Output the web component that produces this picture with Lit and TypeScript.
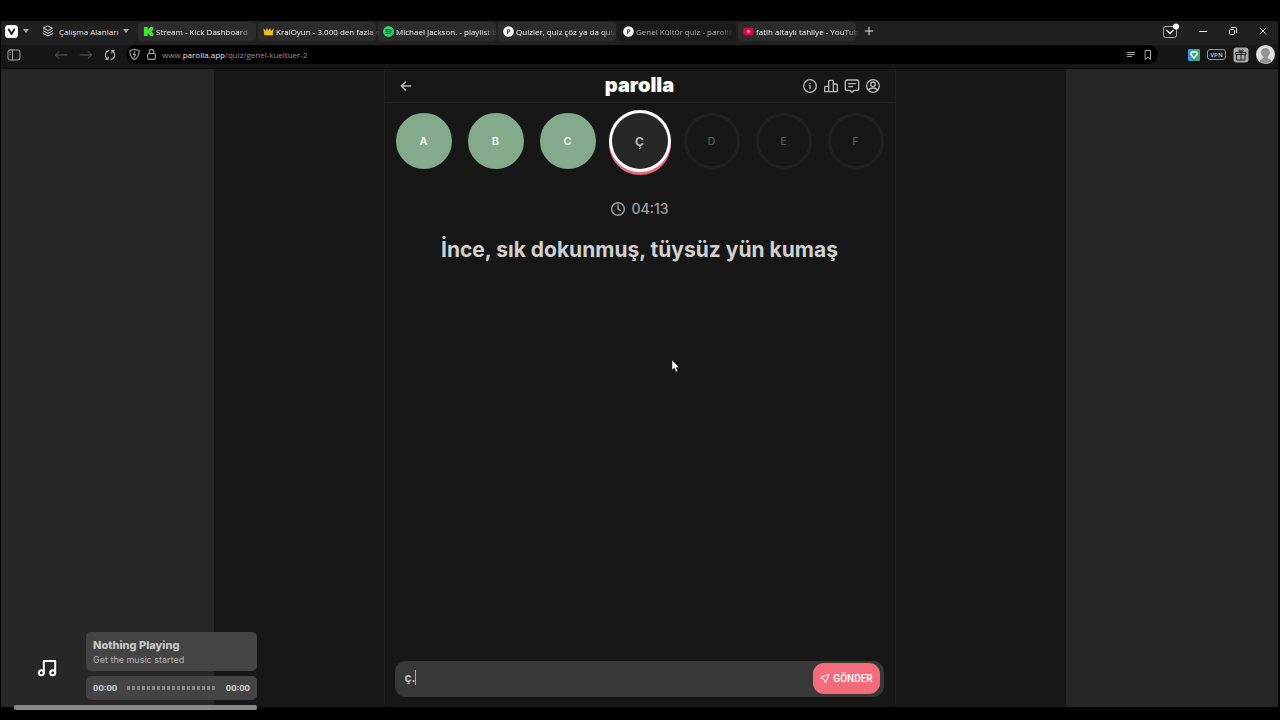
import { LitElement, html, css, svg, TemplateResult } from "lit";
import { customElement, state } from "lit/decorators.js";
import { classMap } from "lit/directives/class-map.js";

type Tab = { title: string; icon: TemplateResult; active?: boolean };
type Letter = { label: string; status: "correct" | "current" | "idle" };

const kick = svg`<path d="M1 1h4v2.500h1.300V2.300h1.200V1H11.300v3.600H10v1.400H9v.3h1v1.200h1.300V11H7.500V9.800H6.300V8.500H5V11H1z" fill="#3fe52b"/>`;
const crown = svg`<path d="M.5 2.500 3 5.500 4.300 2.200 6 5.200 7.700 2.200 9 5.500 11.500 2.500 10.700 10H1.300z" fill="#f1bd18"/>`;
const spotify = svg`<circle cx="6" cy="6" r="5.900" fill="#2fd566"/><path d="M2.700 4.400c2.300-.7 4.700-.4 6.700.7M3 6.300c2-.6 4-.3 5.700.6M3.300 8.100c1.700-.4 3.300-.2 4.700.6" fill="none" stroke="#12401f" stroke-width="1" stroke-linecap="round"/>`;
const parollaMark = svg`<circle cx="6" cy="6" r="5.800" fill="#f4f4f4"/><path d="M5 8.200V4.200h1.200a1.200 1.200 0 0 1 0 2.400H5" fill="none" stroke="#444" stroke-width="1.100"/>`;
const youtube = svg`<rect x=".5" y="2" width="11" height="8" rx="2.200" fill="#e2063f"/><path d="M4.900 4.200 8 6 4.900 7.800z" fill="#fff"/>`;

@customElement("app-root")
export class AppRoot extends LitElement {
  static styles = css`
    :host {
      display: flex;
      flex-direction: column;
      position: relative;
      box-sizing: border-box;
      height: 100vh;
      padding: 21px 2px 13px 1px;
      overflow: hidden;
      background: #000;
      color: #d0d0d0;
      font-family: Inter, "Open Sans", sans-serif;
    }
    * { box-sizing: border-box; }
    button {
      display: inline-flex;
      align-items: center;
      justify-content: center;
      padding: 0;
      border: 0;
      background: none;
      color: inherit;
      font: inherit;
    }
    a { color: inherit; text-decoration: none; }
    svg { display: block; flex: none; fill: none; stroke: currentColor; stroke-linecap: round; stroke-linejoin: round; }
    .chrome { font-family: "Open Sans", sans-serif; font-size: 8px; flex: none; }

    .tabbar { display: flex; align-items: center; height: 24px; padding: 0 4px 4px; background: #202020; }
    .brand { justify-content: flex-start; gap: 5px; width: 32px; }
    .workspaces { justify-content: flex-start; gap: 5px; width: 90px; margin: 0 6px 0 5px; color: #e4e4e4; font-weight: 500; white-space: nowrap; }
    .tabs { display: flex; gap: 2px; height: 19px; }
    .tab {
      display: flex; align-items: center; gap: 2px; width: 118px; padding: 0 4px 0 5px;
      border-radius: 4px; background: #2c2c2c; color: #f2f2f2; font-weight: 500;
    }
    .tab svg { stroke: none; }
    .tab.active { background: #1b1b1b; color: #a8a8a8; font-weight: 400; }
    .tabtitle { flex: 1; white-space: nowrap; mask-image: linear-gradient(90deg, #000 86%, transparent); }
    .newtab { width: 26px; color: #e4e4e4; }
    .window { display: flex; align-items: center; margin-left: auto; padding-right: 5px; gap: 18px; color: #e0e0e0; }

    .toolbar { display: flex; align-items: center; height: 19px; padding: 0 3px 0 6px; background: #161616; color: #a8a8a8; }
    .nav { display: flex; align-items: center; gap: 11px; width: 119px; }
    .nav .history { color: #5e5e5e; }
    .nav .history.first { margin-left: 22px; }
    .address { display: flex; align-items: center; gap: 4px; flex: 1; height: 19px; padding: 0 4px 0 2px; border-radius: 10px; background: #000; }
    .url { flex: 1; min-width: 0; color: #929292; }
    .url b { color: #e4e4e4; font-weight: 500; }
    .address .page { margin-right: 2px; }
    .extensions { display: flex; align-items: center; gap: 7px; margin-left: 30px; }
    .vpn { width: 19px; height: 11px; border: 1px solid #9a9a9a; border-radius: 3px; color: #b0b0b0; font-size: 6px; font-weight: 700; }
    .seam { flex: none; height: 5px; background: #161616; border-bottom: 1px solid #050505; }

    .page-body { display: grid; grid-template-columns: 1fr 852px 1fr; flex: 1; min-height: 0; background: #272727; }
    .stage { grid-column: 2; display: flex; justify-content: center; background: #171717; }
    .game { display: flex; flex-direction: column; width: 100%; max-width: 512px; border: solid #212121; border-width: 0 1px; }
    .header { display: grid; grid-template-columns: 1fr auto 1fr; align-items: center; height: 34px; padding: 0 14px; border-bottom: 1px solid #212121; color: #b9b9b9; }
    .back { justify-self: start; }
    .logo { margin: 0 0 2px; color: #fff; font-size: 20px; font-weight: 900; line-height: 30px; }
    .actions { display: flex; justify-content: flex-end; gap: 5px; }
    .letters { display: flex; gap: 16px; margin: 0; padding: 10px 11px; list-style: none; }
    .letter {
      display: grid; place-items: center; width: 56px; height: 56px; flex: none;
      border-radius: 50%; border: 3px solid #212121; color: #555; font-size: 11px; font-weight: 500;
    }
    .letter.correct { border-color: #83aa8a; background: #83aa8a; color: #f0f5ef; font-weight: 600; }
    .letter.current { border: 0; background: #272727; color: #bdbdbd; font-size: 12px; font-weight: 700; box-shadow: 0 0 0 3px #fff, 0 3px 0 3px #e9697a; }
    .timer { display: flex; align-items: center; justify-content: center; gap: 5px; margin-top: 20px; color: #a0a0a0; font-size: 14px; line-height: 20px; font-weight: 500; }
    .question { margin: 18px 10px 0; color: #d0d0d0; text-align: center; font-size: 21px; line-height: 26px; font-weight: 700; }
    .answer { display: flex; align-items: center; height: 36px; margin: auto 11px 10px 10px; padding: 2px 4px 4px 10px; border-radius: 11px; background: #383838; }
    .entry { position: relative; flex: 1; min-width: 0; display: flex; }
    .field { width: 100%; padding: 0; border: 0; outline: 0; background: none; color: #c2c2c2; caret-color: transparent; font: 700 12px/16px Inter, sans-serif; }
    .caret { position: absolute; left: 10px; top: 0; width: 1px; height: 15px; background: #aaa; }
    .send { gap: 3px; width: 67px; height: 31px; border-radius: 11px; background: #f46c7c; color: #fff; font: 500 10px Roboto, sans-serif; }

    .player { position: absolute; left: 14px; bottom: 10px; width: 243px; display: grid; grid-template-columns: 66px 1fr; gap: 5px 6px; }
    .art { grid-row: span 2; display: grid; place-items: center; color: #fff; }
    .card { border-radius: 5px; background: #444; padding: 0 7px; }
    .track { height: 39px; padding-top: 5px; }
    .track h2 { margin: 0; color: #c8c8c8; font-size: 11px; line-height: 16px; font-weight: 800; }
    .track p { margin: 0; color: #b5b5b5; font-size: 9px; line-height: 13px; }
    .times { display: flex; align-items: center; justify-content: space-between; height: 24px; color: #d4d4d4; font-size: 8px; font-weight: 700; }
    .wave { width: 90px; height: 4px; background: repeating-linear-gradient(90deg, #858585 0 3px, transparent 3px 5px); }
    .progress { grid-column: span 2; height: 5px; border-radius: 2px; background: #878787; }
    .pointer { position: absolute; left: 671px; top: 359px; }
  `;

  @state() private answer = "ç.";

  private tabs: Tab[] = [
    { title: "Stream - Kick Dashboard", icon: kick },
    { title: "KralOyun - 3.000 den fazla o", icon: crown },
    { title: "Michael Jackson. - playlist b", icon: spotify },
    { title: "Quizler, quiz çöz ya da quiz", icon: parollaMark },
    { title: "Genel Kültür quiz - parolla", icon: parollaMark, active: true },
    { title: "fatih altaylı tahliye - YouTub", icon: youtube },
  ];

  private letters: Letter[] = [
    { label: "A", status: "correct" },
    { label: "B", status: "correct" },
    { label: "C", status: "correct" },
    { label: "Ç", status: "current" },
    { label: "D", status: "idle" },
    { label: "E", status: "idle" },
    { label: "F", status: "idle" },
  ];

  private icon(shape: TemplateResult, size = 16, stroke = 2) {
    return html`<svg width=${size} height=${size} viewBox="0 0 24 24" stroke-width=${stroke} aria-hidden="true">${shape}</svg>`;
  }

  private caret() {
    return html`<svg width="6" height="4" viewBox="0 0 6 4" aria-hidden="true"><path d="M0 0h6L3 4z" fill="#aaa" stroke="none"/></svg>`;
  }

  private renderTabBar() {
    return html`
      <div class="chrome tabbar">
        <button class="brand" aria-label="Menu">
          <svg width="13" height="13" viewBox="0 0 13 13"><rect width="13" height="13" rx="3.500" fill="#fff" stroke="none"/><path d="M3.800 4.500 6.500 9l2.700-4.500" stroke="#222" stroke-width="2"/></svg>
          ${this.caret()}
        </button>
        <button class="workspaces">
          ${this.icon(svg`<path d="m12 2 9 4.500-9 4.500-9-4.500zM3 12l9 4.500 9-4.500M3 17.300l9 4.500 9-4.500"/>`, 12)}
          Çalışma Alanları ${this.caret()}
        </button>
        <nav class="tabs">
          ${this.tabs.map((t) => html`
            <a href="#" class=${classMap({ tab: true, active: !!t.active })}>
              <svg width="11" height="11" viewBox="0 0 12 12" aria-hidden="true">${t.icon}</svg>
              <span class="tabtitle">${t.title}</span>
            </a>`)}
        </nav>
        <button class="newtab" aria-label="New tab">${this.icon(svg`<path d="M12 3v18M3 12h18"/>`, 10, 2.4)}</button>
        <div class="window">
          <button aria-label="Tabs">
            <svg width="17" height="17" viewBox="0 0 17 17"><rect x="1.500" y="3.500" width="13" height="11" rx="2" stroke="#aaa"/><path d="m5 7.500 3 3 3-3" stroke-width="1.500"/><circle cx="14" cy="3.500" r="3" fill="#fff" stroke="none"/></svg>
          </button>
          <button aria-label="Minimize"><svg width="12" height="12" viewBox="0 0 12 12"><path d="M2.500 6.500h7"/></svg></button>
          <button aria-label="Restore"><svg width="12" height="12" viewBox="0 0 12 12"><rect x="2.500" y="4.500" width="5" height="5" rx="1"/><path d="M4.500 2.500h4a1 1 0 0 1 1 1v4"/></svg></button>
          <button aria-label="Close"><svg width="12" height="12" viewBox="0 0 12 12"><path d="m3 3 6 6M9 3 3 9"/></svg></button>
        </div>
      </div>`;
  }

  private renderToolbar() {
    return html`
      <div class="chrome toolbar">
        <div class="nav">
          <button aria-label="Panel"><svg width="14" height="12" viewBox="0 0 14 12"><rect x="1" y="1" width="12" height="10" rx="2"/><path d="M5.500 1v10M3.200 3.500v.1M3.200 5.500v.1"/></svg></button>
          <button class="history first" aria-label="Back"><svg width="14" height="12" viewBox="0 0 14 12"><path d="M13 6H1.500M5 2.500 1.500 6 5 9.500"/></svg></button>
          <button class="history" aria-label="Forward"><svg width="14" height="12" viewBox="0 0 14 12"><path d="M1 6h11.500M9 2.500 12.500 6 9 9.500"/></svg></button>
          <button aria-label="Reload"><svg width="12" height="12" viewBox="0 0 12 12"><path d="M4 10.200A4.600 4.600 0 0 1 4.800 1.600M8 1.800a4.600 4.600 0 0 1-.8 8.600M1.800 10.300H4.200V8M10.200 1.700H7.800V4" stroke-width="1.200"/></svg></button>
        </div>
        <div class="address">
          ${this.icon(svg`<path d="M12 2.500c3 1.500 5.500 2 8.500 2 0 8-2 13.500-8.500 17C5.500 18 3.500 12.500 3.500 4.500c3 0 5.500-.5 8.500-2z"/><path d="m13 7-3 5h4l-3 5" />`, 13)}
          ${this.icon(svg`<rect x="5" y="10" width="14" height="11" rx="2"/><path d="M8 10V6.500a4 4 0 0 1 8 0V10"/>`, 13)}
          <a class="url" href="#">www.<b>parolla.app</b>/quiz/genel-kueltuer-2</a>
          <button class="page" aria-label="Reader view"><svg width="10" height="10" viewBox="0 0 10 10"><path d="M1.500 2.500h7M1.500 4.500h7M1.500 6.500h4"/></svg></button>
          <button aria-label="Bookmark"><svg width="12" height="12" viewBox="0 0 12 12"><path d="M3.500 1.500h5v9L6 8l-2.500 2.500z"/></svg></button>
        </div>
        <div class="extensions">
          <button aria-label="Extension"><svg width="12" height="12" viewBox="0 0 12 12"><rect width="6" height="12" rx="1" fill="#4292ce" stroke="none"/><rect x="5" width="7" height="12" rx="1" fill="#41a481" stroke="none"/><path d="M3.500 3h5L9.500 5 6 9 2.500 5z" stroke="#fff" stroke-width="1.300"/></svg></button>
          <button class="vpn">VPN</button>
          <button aria-label="Gifts"><svg width="16" height="16" viewBox="0 0 16 16"><rect x=".5" y=".5" width="15" height="15" rx="3" fill="#aaa" stroke="none"/><path d="M3 5.500h10v2H3zM4 7.500h8v5.500H4zM8 5.500V13M8 5.500C6 5.500 5 3 6.500 3S8 5.500 8 5.500s0-2.500 1.500-2.500S10 5.500 8 5.500" stroke="#252525"/></svg></button>
          <button aria-label="Profile"><svg width="19" height="19" viewBox="0 0 19 19"><circle cx="9.500" cy="9.500" r="9.500" fill="#dedede" stroke="none"/><path d="M3.500 16.500c0-2.500 4-2.500 4-4.500C3 7.500 5.500 3 9.500 3s6.500 4.500 2 9c0 2 4 2 4 4.500a9.500 9.500 0 0 1-12 0z" fill="#929292" stroke="none"/></svg></button>
        </div>
      </div>
      <div class="seam"></div>`;
  }

  private renderGame() {
    return html`
      <main class="page-body">
        <div class="stage">
          <section class="game">
            <header class="header">
              <button class="back" aria-label="Geri">${this.icon(svg`<path d="M20 12H4M11 5l-7 7 7 7"/>`, 14, 2.5)}</button>
              <h1 class="logo">parolla</h1>
              <div class="actions">
                <button aria-label="Bilgi">${this.icon(svg`<circle cx="12" cy="12" r="9.500"/><path d="M12 11.500v4.500M12 8v.1M11 11.500h1"/>`)}</button>
                <button aria-label="İstatistik">${this.icon(svg`<path d="M2.500 20.500V14a1.500 1.500 0 0 1 1.500-1.500h4.500v8zM8.500 20.500V5A1.500 1.500 0 0 1 10 3.500h4A1.500 1.500 0 0 1 15.500 5v15.500zM15.500 9H20a1.500 1.500 0 0 1 1.500 1.500v8.500a1.500 1.500 0 0 1-1.500 1.500h-4.500z"/>`)}</button>
                <button aria-label="Mesajlar">${this.icon(svg`<path d="M4.500 3h15A2.500 2.500 0 0 1 22 5.500v11a2 2 0 0 1-2 2h-5L12 21.500 9 18.500H4a2 2 0 0 1-2-2v-11A2.500 2.500 0 0 1 4.500 3zM7 8.500h10M7 13h6"/>`)}</button>
                <button aria-label="Profil">${this.icon(svg`<circle cx="12" cy="12" r="9.500"/><circle cx="12" cy="9.500" r="3.500"/><path d="M5.500 18.500c1-3 3-3.500 6.500-3.500s5.500.5 6.500 3.500"/>`)}</button>
              </div>
            </header>
            <ol class="letters">
              ${this.letters.map((l) => html`<li class=${classMap({ letter: true, [l.status]: true })}>${l.label}</li>`)}
            </ol>
            <div class="timer">${this.icon(svg`<circle cx="12" cy="12" r="9.500"/><path d="M12 6v6l3.500 2"/>`, 16, 2.2)}<time>04:13</time></div>
            <h2 class="question">İnce, sık dokunmuş, tüysüz yün kumaş</h2>
            <form class="answer" @submit=${(e: Event) => e.preventDefault()}>
              <div class="entry">
                <input class="field" aria-label="Cevap" autocomplete="off" .value=${this.answer}
                  @input=${(e: InputEvent) => (this.answer = (e.target as HTMLInputElement).value)} />
                <span class="caret"></span>
              </div>
              <button class="send">${this.icon(svg`<path d="M21 3 3 10l7.500 3.500L14 21z"/>`, 11)}GÖNDER</button>
            </form>
          </section>
        </div>
      </main>`;
  }

  private renderPlayer() {
    return html`
      <aside class="player">
        <div class="art">${this.icon(svg`<path d="M8.800 18.800V7h11.400v11.800"/><circle cx="6.300" cy="18.800" r="2.500"/><circle cx="17.700" cy="18.800" r="2.500"/>`, 24)}</div>
        <div class="card track"><h2>Nothing Playing</h2><p>Get the music started</p></div>
        <div class="card times"><span>00:00</span><span class="wave"></span><span>00:00</span></div>
        <div class="progress"></div>
      </aside>`;
  }

  render() {
    return html`
      ${this.renderTabBar()} ${this.renderToolbar()} ${this.renderGame()} ${this.renderPlayer()}
      <svg class="pointer" width="9" height="14" viewBox="0 0 9 14" aria-hidden="true"><path d="M1 1v10l2.300-2 1.700 4 1.800-.8L5.200 8.400H8z" fill="#fff" stroke="#111" stroke-width=".5"/></svg>
    `;
  }
}
